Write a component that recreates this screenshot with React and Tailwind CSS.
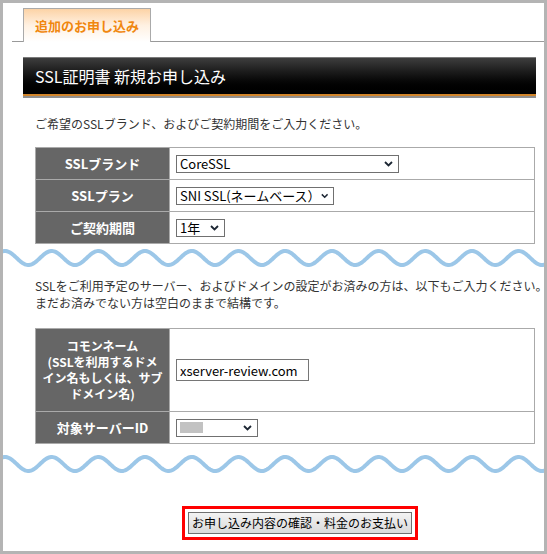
const WAVE = (() => {
  const pts = [];
  for (let x = 0; x <= 541; x += 1) {
    const y = 14 - 7 * Math.cos((2 * Math.PI * (x - 2)) / 46.7);
    pts.push(`${x},${y.toFixed(2)}`);
  }
  return pts.join(" ");
})();

function Wave({ className = "" }) {
  return (
    <svg className={`block ${className}`} width="541" height="28" viewBox="0 0 541 28">
      <polyline points={WAVE} fill="none" stroke="#9cc7e8" strokeWidth="4" strokeLinecap="round" />
    </svg>
  );
}

function Chevron() {
  return (
    <svg width="9" height="6" viewBox="0 0 9 6">
      <polyline points="1,1 4.5,4.5 8,1" fill="none" stroke="#1c2633" strokeWidth="1.8" />
    </svg>
  );
}

function Sel({ className, children }) {
  return (
    <div
      className={`flex h-[18px] items-center justify-between overflow-hidden whitespace-nowrap border border-[#707070] bg-white pl-[3px] pr-[5px] text-[13px] leading-none text-black ${className}`}
    >
      <span className="flex items-center">{children}</span>
      <Chevron />
    </div>
  );
}

function Row({ label, height = "h-[32px]", children }) {
  return (
    <div className={`flex border-b border-[#aaa] ${height}`}>
      <div className="flex w-[134px] shrink-0 items-center justify-center border-r border-[#aaa] bg-[#666] text-center text-[13px] font-bold text-white">
        {label}
      </div>
      <div className="flex flex-1 items-center pl-[6px]">{children}</div>
    </div>
  );
}

export default function App() {
  return (
    <div className="h-[554px] w-[547px] overflow-hidden border-[3px] border-[#b4b4b4] bg-white font-['Noto_Sans_CJK_JP',sans-serif] text-[#333]">
      <div className="ml-[9px] mt-[5px] flex border-b border-[#999] pl-[11px]">
        <div className="-mb-px flex h-[34px] items-center border border-b-0 border-[#aaa] bg-gradient-to-b from-[#fcd3a6] via-[#fff1e2] to-white px-[11px] text-[13px] font-bold text-[#f0870f]">
          追加のお申し込み
        </div>
      </div>

      <div className="ml-[20px] mt-[15px] w-[513px]">
        <div className="flex h-[37px] items-center border-t border-[#7a7a7a] bg-gradient-to-b from-[#3e3e3e] to-black pl-[12px] text-[16px] text-white">
          SSL証明書 新規お申し込み
        </div>
        <div className="h-[2px] bg-[#d2852a]" />
        <div className="h-[2px] bg-[#8f8f8f]" />
      </div>

      <p className="mt-[17px] whitespace-nowrap pl-[32px] text-[12px] leading-[18px]">
        ご希望のSSLブランド、およびご契約期間をご入力ください。
      </p>

      <div className="ml-[32px] mt-[14px] w-[500px] border-l border-r border-t border-[#aaa]">
        <Row label="SSLブランド">
          <Sel className="w-[223px]">CoreSSL</Sel>
        </Row>
        <Row label="SSLプラン">
          <Sel className="w-[158px]">SNI SSL(ネームベース）</Sel>
        </Row>
        <Row label="ご契約期間">
          <Sel className="w-[49px]">1年</Sel>
        </Row>
      </div>

      <Wave />

      <div className="mt-[5px] whitespace-nowrap pl-[32px] text-[12px] leading-[17px]">
        <p>SSLをご利用予定のサーバー、およびドメインの設定がお済みの方は、以下もご入力ください。</p>
        <p>まだお済みでない方は空白のままで結構です。</p>
      </div>

      <div className="ml-[32px] mt-[17px] w-[500px] border-l border-r border-t border-[#aaa]">
        <Row
          height="h-[83px]"
          label={
            <span className="whitespace-nowrap text-[12px] leading-[16px]">
              コモンネーム
              <br />
              (SSLを利用するドメ
              <br />
              イン名もしくは、サブ
              <br />
              ドメイン名)
            </span>
          }
        >
          <input
            readOnly
            value="xserver-review.com"
            className="h-[22px] w-[133px] border border-[#767676] bg-white pl-[3px] text-[13px] text-black outline-none"
          />
        </Row>
        <Row label="対象サーバーID">
          <Sel className="w-[82px]">
            <span className="block h-[11px] w-[23px] bg-[#c2c2c2]" />
          </Sel>
        </Row>
      </div>

      <Wave className="mt-[6px]" />

      <div className="mt-[28px] pl-[179px]">
        <div className="w-fit border-[3px] border-[#f00] p-[3px]">
          <button
            type="button"
            className="flex h-[22px] w-[224px] items-center justify-center border border-[#707070] bg-gradient-to-b from-[#f3f3f3] to-[#dadada] text-[12px] text-black"
          >
            お申し込み内容の確認・料金のお支払い
          </button>
        </div>
      </div>
    </div>
  );
}
